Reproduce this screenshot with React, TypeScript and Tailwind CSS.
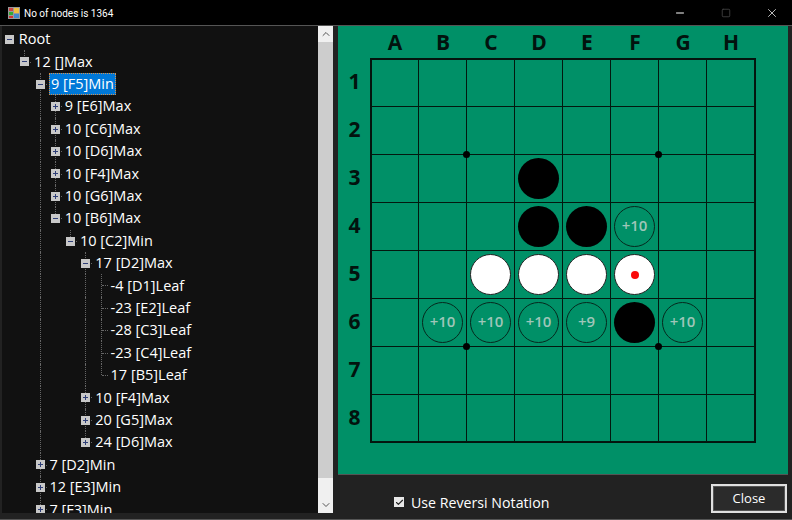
import { Minus, Square, X, ChevronUp, ChevronDown, Check } from "lucide-react";

type Kind = "open" | "closed" | "leaf";
type Node = { d: number; text: string; kind: Kind; selected?: boolean };

const nodes: Node[] = [
  { d: 0, text: "Root", kind: "open" },
  { d: 1, text: "12 []Max", kind: "open" },
  { d: 2, text: "9 [F5]Min", kind: "open", selected: true },
  { d: 3, text: "9 [E6]Max", kind: "closed" },
  { d: 3, text: "10 [C6]Max", kind: "closed" },
  { d: 3, text: "10 [D6]Max", kind: "closed" },
  { d: 3, text: "10 [F4]Max", kind: "closed" },
  { d: 3, text: "10 [G6]Max", kind: "closed" },
  { d: 3, text: "10 [B6]Max", kind: "open" },
  { d: 4, text: "10 [C2]Min", kind: "open" },
  { d: 5, text: "17 [D2]Max", kind: "open" },
  { d: 6, text: "-4 [D1]Leaf", kind: "leaf" },
  { d: 6, text: "-23 [E2]Leaf", kind: "leaf" },
  { d: 6, text: "-28 [C3]Leaf", kind: "leaf" },
  { d: 6, text: "-23 [C4]Leaf", kind: "leaf" },
  { d: 6, text: "17 [B5]Leaf", kind: "leaf" },
  { d: 5, text: "10 [F4]Max", kind: "closed" },
  { d: 5, text: "20 [G5]Max", kind: "closed" },
  { d: 5, text: "24 [D6]Max", kind: "closed" },
  { d: 2, text: "7 [D2]Min", kind: "closed" },
  { d: 2, text: "12 [E3]Min", kind: "closed" },
  { d: 2, text: "7 [F3]Min", kind: "closed" },
];

// is there a later sibling at this depth, so the guide has to carry on
function continues(i: number, col: number) {
  for (let j = i + 1; j < nodes.length; j++) {
    if (nodes[j].d < col) return false;
    if (nodes[j].d === col) return true;
  }
  return col === 2; // list runs on past the clipped bottom
}

function Guide({ i, col, d }: { i: number; col: number; d: number }) {
  const more = col > 0 && continues(i, col);
  const own = col === d && col > 0;
  return (
    <div className="relative w-[15.3px] h-full shrink-0">
      {(own || more) && (
        <div className={`absolute left-[7px] top-0 w-0 border-l border-dotted border-[#666] ${more ? "bottom-0" : "h-1/2"}`} />
      )}
      {own && <div className="absolute left-[8px] top-1/2 w-[6px] h-0 border-t border-dotted border-[#666]" />}
      {col === d && nodes[i].kind !== "leaf" && (
        <div className="absolute left-[3px] top-[7px] w-[9px] h-[9px] bg-[#c8c8c8] flex items-center justify-center">
          <div className="relative w-[5px] h-[1px] bg-[#2f3f78]">
            {nodes[i].kind === "closed" && <div className="absolute left-[2px] top-[-2px] w-[1px] h-[5px] bg-[#2f3f78]" />}
          </div>
        </div>
      )}
    </div>
  );
}

function Tree() {
  return (
    <div className="flex-1 overflow-hidden bg-[#111111] pt-[2px] text-[14.5px] text-white">
      {nodes.map((n, i) => (
        <div key={i} className="flex items-center h-[22.4px] whitespace-nowrap">
          {Array.from({ length: n.d + 1 }).map((_, col) => (
            <Guide key={col} i={i} col={col} d={n.d} />
          ))}
          <span
            className={
              n.selected
                ? "ml-[1px] px-px leading-[20px] h-[22px] bg-[#0078d7] border border-dotted border-[#d8904a] -mx-px"
                : "ml-[1.5px]"
            }
          >
            {n.text}
          </span>
        </div>
      ))}
    </div>
  );
}

function Scrollbar() {
  return (
    <div className="w-[15px] flex flex-col bg-[#f0f0f0] text-[#555]">
      <div className="h-[16px] flex items-center justify-center"><ChevronUp size={12} /></div>
      <div className="h-[436px] bg-[#cdcdcd]" />
      <div className="flex-1" />
      <div className="h-[16px] flex items-center justify-center"><ChevronDown size={12} /></div>
    </div>
  );
}

const cols = ["A", "B", "C", "D", "E", "F", "G", "H"];
const rows = [1, 2, 3, 4, 5, 6, 7, 8];

// board contents by "col+row"
const cells: Record<string, string> = {
  D3: "b", D4: "b", E4: "b", F4: "+10",
  C5: "w", D5: "w", E5: "w", F5: "last",
  B6: "+10", C6: "+10", D6: "+10", E6: "+9", F6: "b", G6: "+10",
};

function Cell({ v }: { v?: string }) {
  if (!v) return null;
  if (v === "b") return <div className="w-[41px] h-[41px] rounded-full bg-black" />;
  if (v === "w" || v === "last")
    return (
      <div className="w-[41px] h-[41px] rounded-full bg-white border border-[#222] flex items-center justify-center">
        {v === "last" && <div className="w-[8px] h-[8px] rounded-full bg-[#fa0a0a]" />}
      </div>
    );
  return (
    <div className="w-[41px] h-[41px] rounded-full border border-[#06281d] pb-[2px] flex items-center justify-center text-[15px] font-semibold text-[#9fc6b9]">
      {v}
    </div>
  );
}

function Board() {
  return (
    <div className="h-[448px] bg-[#009067] pl-[33px] pt-[2px]">
      <div className="flex h-[31px]">
        {cols.map((c) => (
          <div key={c} className="w-[48px] text-center text-[21px] font-bold leading-[28px] text-[#02130e]">{c}</div>
        ))}
      </div>
      <div className="flex">
        <div className="w-0">
          {rows.map((r) => (
            <div key={r} className="h-[48px] w-[33px] -ml-[33px] pb-[2px] flex items-center justify-center text-[21px] font-bold text-[#02130e]">{r}</div>
          ))}
        </div>
        <div className="relative h-[383px] grid grid-cols-[repeat(8,48px)] grid-rows-[repeat(7,48px)_47px] shadow-[0_0_0_1px_#04140e,inset_1px_1px_0_#04140e]">
          {rows.map((r) =>
            cols.map((c) => (
              <div key={c + r} className="flex items-center justify-center border-r border-b border-[#03180f]">
                <Cell v={cells[c + r]} />
              </div>
            ))
          )}
          <div className="absolute left-[92px] top-[92px] w-[7px] h-[7px] rounded-full bg-black" />
          <div className="absolute left-[284px] top-[92px] w-[7px] h-[7px] rounded-full bg-black" />
          <div className="absolute left-[92px] top-[284px] w-[7px] h-[7px] rounded-full bg-black" />
          <div className="absolute left-[284px] top-[284px] w-[7px] h-[7px] rounded-full bg-black" />
        </div>
      </div>
    </div>
  );
}

export default function App() {
  return (
    <div className="w-[792px] h-[520px] flex flex-col bg-[#222222] border-b border-[#555] overflow-hidden font-['Open_Sans',sans-serif]">
      {/* Title bar */}
      <div className="h-[26px] shrink-0 bg-black flex items-center pl-[8px] border-b border-[#555] text-white">
        <svg width="12" height="12" viewBox="0 0 12 12">
          <rect x="0" y="0" width="12" height="12" fill="#999" />
          <rect x="1" y="1" width="4" height="3" fill="#c44" />
          <rect x="6" y="1" width="5" height="5" fill="#f0c040" />
          <rect x="1" y="5" width="4" height="3" fill="#3a3" />
          <rect x="1" y="9" width="4" height="2" fill="#c33" />
          <rect x="6" y="7" width="5" height="4" fill="#48c" />
        </svg>
        <span className="ml-[4px] pt-[1px] text-[10px] font-['Roboto',sans-serif]">No of nodes is 1364</span>
        <div className="ml-auto flex items-center">
          <div className="w-[46px] flex justify-center"><Minus size={12} /></div>
          <div className="w-[46px] flex justify-center text-[#444]"><Square size={10} /></div>
          <div className="w-[46px] flex justify-center mr-[-3px]"><X size={14} strokeWidth={1.25} /></div>
        </div>
      </div>

      {/* Body */}
      <div className="flex-1 flex min-h-0">
        <div className="w-[331px] h-[487px] ml-[2px] flex">
          <Tree />
          <Scrollbar />
        </div>
        <div className="ml-[5px] w-[450px] flex flex-col">
          <Board />
          <div className="flex-1 flex pl-[56px] border-t border-[#555] text-white">
            <div className="mt-[22px] w-[10px] h-[10px] bg-[#e8e8e8] flex items-center justify-center">
              <Check size={9} strokeWidth={3} className="text-[#222]" />
            </div>
            <span className="ml-[7px] mt-[17px] text-[14.2px] leading-[22px]">Use Reversi Notation</span>
            <div className="ml-auto mr-[1px] mt-[9px] w-[76px] h-[29px] border-2 border-[#e0e0e0] outline outline-[#555] -outline-offset-3 bg-[#2b2b2b] flex items-center justify-center text-[13px]">
              Close
            </div>
          </div>
        </div>
      </div>
    </div>
  );
}
